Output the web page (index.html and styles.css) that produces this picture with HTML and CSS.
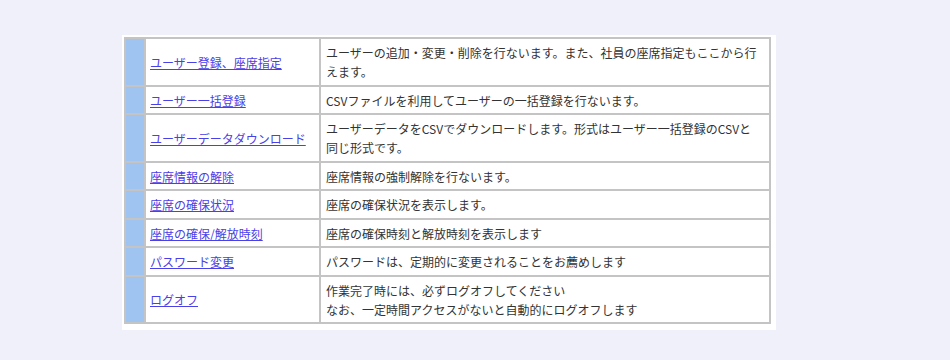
FILE: index.html
```html
<!DOCTYPE html>
<html lang="ja">
<head>
<meta charset="utf-8">
<title>管理メニュー</title>
<link rel="stylesheet" href="styles.css">
</head>
<body>
<div class="page">
  <div class="panel">
    <table class="menu">
      <tr>
        <td class="mark"></td>
        <td class="name"><a href="#">ユーザー登録、座席指定</a></td>
        <td class="desc">ユーザーの追加・変更・削除を行ないます。また、社員の座席指定もここから行えます。</td>
      </tr>
      <tr>
        <td class="mark"></td>
        <td class="name"><a href="#">ユーザー一括登録</a></td>
        <td class="desc">CSVファイルを利用してユーザーの一括登録を行ないます。</td>
      </tr>
      <tr>
        <td class="mark"></td>
        <td class="name"><a href="#">ユーザーデータダウンロード</a></td>
        <td class="desc">ユーザーデータをCSVでダウンロードします。形式はユーザー一括登録のCSVと同じ形式です。</td>
      </tr>
      <tr>
        <td class="mark"></td>
        <td class="name"><a href="#">座席情報の解除</a></td>
        <td class="desc">座席情報の強制解除を行ないます。</td>
      </tr>
      <tr>
        <td class="mark"></td>
        <td class="name"><a href="#">座席の確保状況</a></td>
        <td class="desc">座席の確保状況を表示します。</td>
      </tr>
      <tr>
        <td class="mark"></td>
        <td class="name"><a href="#">座席の確保/解放時刻</a></td>
        <td class="desc">座席の確保時刻と解放時刻を表示します</td>
      </tr>
      <tr>
        <td class="mark"></td>
        <td class="name"><a href="#">パスワード変更</a></td>
        <td class="desc">パスワードは、定期的に変更されることをお薦めします</td>
      </tr>
      <tr>
        <td class="mark"></td>
        <td class="name"><a href="#">ログオフ</a></td>
        <td class="desc">作業完了時には、必ずログオフしてください<br>なお、一定時間アクセスがないと自動的にログオフします</td>
      </tr>
    </table>
  </div>
</div>
</body>
</html>
```

FILE: styles.css
```css
html, body {
  margin: 0;
  padding: 0;
  background: #f0f0fb;
}

body {
  font-family: "Noto Sans CJK JP", "Noto Sans", sans-serif;
  font-size: 12px;
  line-height: 19px;
  color: #333;
}

.page {
  padding: 35px 0 0 122px;
}

.panel {
  display: inline-block;
  background: #fff;
  padding: 2px 5px 6px 2px;
}

.menu {
  width: 647px;
  table-layout: fixed;
  border-spacing: 0;
  border-top: 2px solid #c4c4c4;
  border-left: 2px solid #c4c4c4;
}

.menu td {
  box-sizing: border-box;
  border-right: 2px solid #c4c4c4;
  border-bottom: 2px solid #c4c4c4;
  padding: 4px 8px 3.5px 5px;
  vertical-align: middle;
}

.menu .mark {
  width: 20px;
  padding: 0;
  background: #9fc4f2;
}

.menu .name {
  width: 175px;
  padding-left: 4px;
}

.menu .name a {
  color: #4a40e8;
  text-decoration: underline;
}

.menu .desc {
  width: 450px;
}
```
